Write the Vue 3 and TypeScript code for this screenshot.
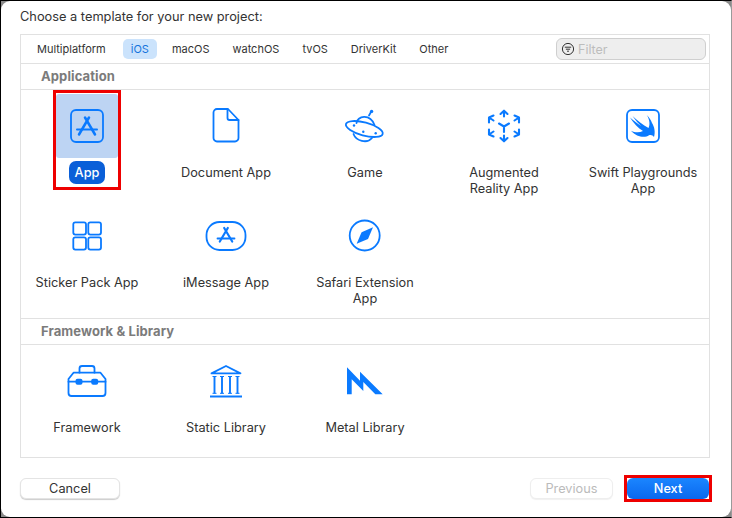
<script setup lang="ts">
interface Tile { name: string; icon: string; selected?: boolean }
const tabs: string[] = ['Multiplatform', 'iOS', 'macOS', 'watchOS', 'tvOS', 'DriverKit', 'Other']
const sections: { title: string; tiles: Tile[] }[] = [
  {
    title: 'Application',
    tiles: [
      { name: 'App', icon: 'app', selected: true },
      { name: 'Document App', icon: 'doc' },
      { name: 'Game', icon: 'game' },
      { name: 'Augmented\nReality App', icon: 'ar' },
      { name: 'Swift Playgrounds\nApp', icon: 'swift' },
      { name: 'Sticker Pack App', icon: 'sticker' },
      { name: 'iMessage App', icon: 'imessage' },
      { name: 'Safari Extension\nApp', icon: 'safari' },
    ],
  },
  {
    title: 'Framework & Library',
    tiles: [
      { name: 'Framework', icon: 'framework' },
      { name: 'Static Library', icon: 'static' },
      { name: 'Metal Library', icon: 'metal' },
    ],
  },
]
</script>

<template>
  <div class="screen">
    <div class="window">
      <div class="title">Choose a template for your new project:</div>
      <div class="panel">
        <div class="tabbar">
          <div class="tabs">
            <span v-for="t in tabs" :key="t" class="tab" :class="{ active: t === 'iOS' }">{{ t }}</span>
          </div>
          <div class="filter">
            <svg width="14" height="14" viewBox="0 0 14 14" fill="none" stroke="#333" stroke-width="1">
              <circle cx="7" cy="7" r="5.6" />
              <path d="M3.8 5.2h6.4M4.9 7.2h4.2M6 9.2h2" />
            </svg>
            <span>Filter</span>
          </div>
        </div>
        <section v-for="(s, si) in sections" :key="s.title" class="section" :class="{ last: si === 1 }">
          <div class="section-title">{{ s.title }}</div>
          <div class="grid">
            <div v-for="t in s.tiles" :key="t.name" class="tile" :class="{ selected: t.selected }">
              <div class="icon">
                <svg width="48" height="48" viewBox="0 0 48 48" fill="none" stroke="#0a7aff" stroke-width="1.8" stroke-linecap="round" stroke-linejoin="round">
                  <template v-if="t.icon === 'app'">
                    <rect x="8" y="8" width="32" height="32" rx="5" />
                    <path stroke-width="2.5" d="M22 15.5l10 17M26 15.5l-10 17" />
                    <path stroke-width="2" d="M14 27.5h20" />
                  </template>
                  <template v-else-if="t.icon === 'doc'">
                    <path d="M15 7H26L36.5 18V36a3.5 3.5 0 0 1-3.5 3.5H15a3.5 3.5 0 0 1-3.5-3.5V10.5A3.5 3.5 0 0 1 15 7Z" />
                    <path d="M25.5 7V16a2 2 0 0 0 2 2H36.5" />
                  </template>
                  <template v-else-if="t.icon === 'game'">
                    <ellipse cx="23.3" cy="27" rx="19" ry="6.5" transform="rotate(15 23.3 27)" />
                    <path d="M15.5 21C16 14 29 11 33.5 23" />
                    <path d="M28 13.5L30 10" />
                    <circle cx="30.6" cy="9.4" r="1.7" fill="#0a7aff" stroke="none" />
                    <path d="M12.5 32C15 39 26 42 31 36" />
                    <circle cx="13" cy="23.5" r="1.2" fill="#0a7aff" stroke="none" />
                    <circle cx="22.3" cy="29.7" r="1.2" fill="#0a7aff" stroke="none" />
                    <circle cx="34.7" cy="31.3" r="1.2" fill="#0a7aff" stroke="none" />
                  </template>
                  <template v-else-if="t.icon === 'ar'">
                    <g stroke-width="2.1">
                      <path d="M24 9V14.5M20.5 12L24 8.7L27.5 12" />
                      <path d="M24 33.5V39M20.5 36L24 39.3L27.5 36" />
                      <path d="M9 20.5V15.5L13.5 13.5M9 15.5L13.5 18.5" />
                      <path d="M39 20.5V15.5L34.5 13.5M39 15.5L34.5 18.5" />
                      <path d="M9 27.5V32.5L13.5 34.5M9 32.5L13.5 29.5" />
                      <path d="M39 27.5V32.5L34.5 34.5M39 32.5L34.5 29.5" />
                      <path d="M19 21.5L24 24.5L29 21.5M24 24.5V30" />
                    </g>
                  </template>
                  <template v-else-if="t.icon === 'swift'">
                    <rect x="8" y="8" width="32" height="32" rx="5" />
                    <path fill="#0a7aff" stroke="none" d="M12 28.7C18 35.5 26 36 30 33.3C32 32.5 34 33.5 35 35C36.5 30 35.5 25 33 21C32 18 30 15 27.7 13C31 18 31 23 29.5 26C24 23 18 18 13.5 14C17 19 19.5 21.5 22 24C19 22 15 19 11 15.5C14.5 21 19 26 24 29C20 31 16 30.5 12 28.7Z" />
                  </template>
                  <template v-else-if="t.icon === 'sticker'">
                    <rect x="10.3" y="10.3" width="12.7" height="12.3" rx="2" />
                    <rect x="25.3" y="10.3" width="12.7" height="12.3" rx="2" />
                    <rect x="10.3" y="25.3" width="12.7" height="12.3" rx="2" />
                    <rect x="25.3" y="25.3" width="12.7" height="12.3" rx="2" />
                  </template>
                  <template v-else-if="t.icon === 'imessage'">
                    <rect x="4.5" y="10" width="39" height="28" rx="13" />
                    <path stroke-width="2.2" d="M22.2 16l8 13.5M25.8 16l-8 13.5" />
                    <path stroke-width="1.8" d="M15.5 26.5h17" />
                  </template>
                  <template v-else-if="t.icon === 'safari'">
                    <circle cx="23.7" cy="23.5" r="15" />
                    <path fill="#0a7aff" stroke="none" d="M32 15.3L27 27L15.6 31.8L20.6 20.2Z" />
                  </template>
                  <template v-else-if="t.icon === 'framework'">
                    <path d="M16.5 15.7V11.5a2.5 2.5 0 0 1 2.5-2.5H29a2.5 2.5 0 0 1 2.5 2.5V15.7" />
                    <path d="M10.5 15.7H37.5L42.5 22V36a3 3 0 0 1-3 3H8.5a3 3 0 0 1-3-3V22Z" />
                    <path d="M5.5 24.7H42.5" />
                    <rect x="12.5" y="21.7" width="7" height="6" rx="2" fill="#0a7aff" stroke="none" />
                    <rect x="28.2" y="21.7" width="7" height="6" rx="2" fill="#0a7aff" stroke="none" />
                  </template>
                  <template v-else-if="t.icon === 'static'">
                    <path stroke-linecap="butt" d="M9.5 16.4L24 9L38.5 16.4Z" />
                    <path stroke-width="1.9" stroke-linecap="butt" d="M12.5 19V36.5M20 19V36.5M28 19V36.5M35.5 19V36.5" />
                    <path stroke-width="1" stroke-linecap="butt" d="M10.5 19.5h4M18 19.5h4M26 19.5h4M33.5 19.5h4M10.5 36.3h4M18 36.3h4M26 36.3h4M33.5 36.3h4" />
                    <path stroke-width="2" stroke-linecap="butt" d="M8 39.5H40" />
                  </template>
                  <template v-else-if="t.icon === 'metal'">
                    <path fill="#0a7aff" stroke="none" d="M6 10.3L19 23.7V14.7L41.7 37.3H34.3L22.3 25V34L10.7 22.3V37.3H6Z" />
                  </template>
                </svg>
              </div>
              <div class="label">{{ t.name }}</div>
              <div v-if="t.selected" class="mark mark-tile"></div>
            </div>
          </div>
        </section>
      </div>
      <div class="footer">
        <button class="btn cancel">Cancel</button>
        <div class="right">
          <button class="btn prev">Previous</button>
          <button class="btn next">Next<span class="mark mark-next"></span></button>
        </div>
      </div>
    </div>
  </div>
</template>

<style scoped>
.screen {
  width: 732px;
  height: 518px;
  box-sizing: border-box;
  background: #8a8a8a;
  border: 1px solid #000;
  border-right-color: #9a9a9a;
  font-family: Inter, "Noto Sans", sans-serif;
  overflow: hidden;
}
.window {
  height: 100%;
  box-sizing: border-box;
  background: #fff;
  border-radius: 9px;
  padding: 0 21px 0 19px;
  display: flex;
  flex-direction: column;
}
.title {
  height: 33px;
  line-height: 32px;
  font-size: 12.8px;
  color: #333;
}
.panel {
  height: 424px;
  box-sizing: border-box;
  border: 1px solid #e1e1e1;
  overflow: hidden;
}
.tabbar {
  height: 29px;
  box-sizing: border-box;
  border-bottom: 1px solid #e1e1e1;
  display: flex;
  align-items: center;
  justify-content: space-between;
  padding: 0 3px 0 8px;
}
.tabs {
  display: flex;
  gap: 7px;
}
.tab {
  font-size: 11px;
  line-height: 20px;
  padding: 0 8px;
  border-radius: 5px;
  color: #333;
}
.tab:first-child {
  margin-right: 2px;
}
.tab.active {
  background: #cbe3fc;
  color: #1474dc;
}
.filter {
  width: 150px;
  height: 22px;
  box-sizing: border-box;
  background: #eee;
  border: 1px solid #cfcfcf;
  border-radius: 6px;
  display: flex;
  align-items: center;
  gap: 3px;
  padding-left: 4px;
  font-size: 12.5px;
  color: #bdbdbd;
}
.section {
  height: 255px;
  box-sizing: border-box;
  border-bottom: 1px solid #e1e1e1;
}
.section.last {
  height: 138px;
  border-bottom: none;
}
.section-title {
  height: 26px;
  box-sizing: border-box;
  border-bottom: 1px solid #e1e1e1;
  padding-left: 20px;
  line-height: 25px;
  font-size: 13px;
  letter-spacing: 0.1px;
  font-weight: 700;
  color: #7b7b7b;
}
.grid {
  display: grid;
  grid-template-columns: repeat(5, 139px);
  grid-auto-rows: 110px;
  justify-content: center;
}
.tile {
  position: relative;
  display: flex;
  flex-direction: column;
  align-items: center;
  padding-top: 4px;
  box-sizing: border-box;
}
.icon {
  width: 62px;
  height: 64px;
  border-radius: 3px;
  display: flex;
  align-items: center;
  justify-content: center;
  flex: none;
}
.selected .icon {
  background: #bdd4f3;
}
.label {
  margin-top: 7px;
  font-size: 12.75px;
  line-height: 16px;
  color: #333;
  text-align: center;
  white-space: pre-line;
}
.selected .label {
  margin-top: 3px;
  padding: 3.5px 6px;
  border-radius: 7px;
  background: #0a5fd8;
  color: #fff;
  font-weight: 500;
}
.mark {
  position: absolute;
  box-sizing: border-box;
  border: 3px solid #ee0000;
  pointer-events: none;
}
.mark-tile {
  left: 35.5px;
  top: 0;
  width: 68px;
  height: 100px;
}
.footer {
  margin-top: 20px;
  padding-right: 1px;
  display: flex;
  justify-content: space-between;
  align-items: center;
}
.right {
  display: flex;
  gap: 14px;
}
.btn {
  height: 21px;
  box-sizing: border-box;
  border-radius: 6px;
  font-family: inherit;
  font-size: 12.75px;
  padding: 0;
  background: #fff;
  border: 1px solid #e4e4e4;
  color: #333;
  box-shadow: 0 1px 1px rgba(0, 0, 0, 0.2);
}
.cancel {
  width: 100px;
}
.prev {
  width: 83px;
  color: #bbb;
  border-color: #eee;
  box-shadow: 0 1px 1px rgba(0, 0, 0, 0.06);
}
.next {
  position: relative;
  width: 82px;
  border: none;
  box-shadow: none;
  color: #fff;
  font-weight: 500;
  background: linear-gradient(#1b86ff, #0a68ee);
}
.mark-next {
  inset: -3px;
}
</style>

<style>
body {
  background: #fff;
}
</style>
